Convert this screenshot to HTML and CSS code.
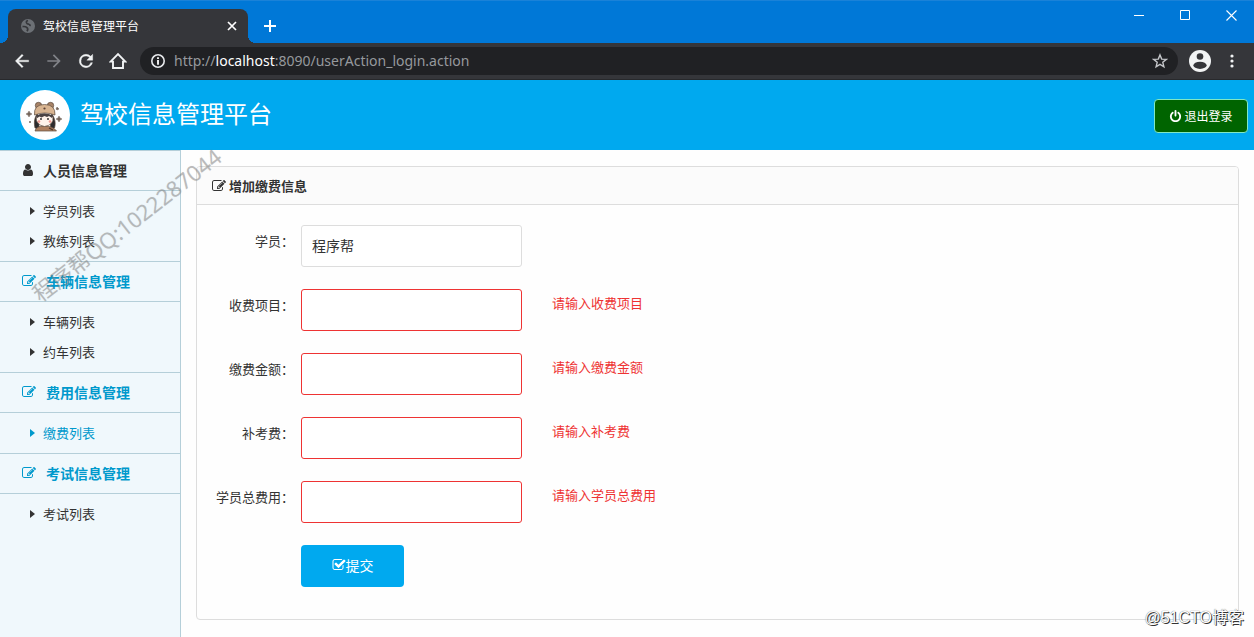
FILE: index.html
```html
<!DOCTYPE html>
<html lang="zh-CN">
<head>
<meta charset="utf-8">
<title>驾校信息管理平台</title>
<link rel="stylesheet" href="styles.css">
</head>
<body>
<svg class="sprite" aria-hidden="true">
  <symbol id="edit" viewBox="0 0 1792 1792"><path d="M888 1184l116-116-152-152-116 116v56h96v96h56zm440-720q-16-16-33 1l-350 350q-17 17-1 33t33-1l350-350q17-17 1-33zm80 594v190q0 119-84.5 203.5t-203.5 84.5h-832q-119 0-203.5-84.5t-84.5-203.5v-832q0-119 84.5-203.5t203.5-84.5h832q63 0 117 25 15 7 18 23 3 17-9 29l-49 49q-14 14-32 8-23-6-45-6h-832q-66 0-113 47t-47 113v832q0 66 47 113t113 47h832q66 0 113-47t47-113v-126q0-13 9-22l64-64q15-15 35-7t20 29zm-96-738l288 288-672 672h-288v-288zm444 132l-92 92-288-288 92-92q28-28 68-28t68 28l152 152q28 28 28 68t-28 68z"/></symbol>
  <symbol id="check" viewBox="0 0 1792 1792"><path d="M1472 930v318q0 119-84.5 203.5t-203.5 84.5h-832q-119 0-203.5-84.5t-84.5-203.5v-832q0-119 84.5-203.5t203.5-84.5h832q63 0 117 25 15 7 18 23 3 17-9 29l-49 49q-10 10-23 10-3 0-9-2-23-6-45-6h-832q-66 0-113 47t-47 113v832q0 66 47 113t113 47h832q66 0 113-47t47-113v-254q0-13 9-22l64-64q10-10 23-10 6 0 12 3 20 8 20 29zm231-489l-814 814q-24 24-57 24t-57-24l-430-430q-24-24-24-57t24-57l110-110q24-24 57-24t57 24l263 263 647-647q24-24 57-24t57 24l110 110q24 24 24 57t-24 57z"/></symbol>
  <symbol id="power" viewBox="0 0 1792 1792"><path d="M1664 896q0 156-61 298t-164 245-245 164-298 61-298-61-245-164-164-245-61-298q0-182 80.5-343t226.5-270q43-32 95.5-25t83.5 50q32 42 24.5 94.5t-49.5 84.5q-98 74-151.5 181t-53.5 228q0 104 40.5 198.5t109.5 163.5 163.5 109.5 198.5 40.5 198.5-40.5 163.5-109.5 109.5-163.5 40.5-198.5q0-121-53.5-228t-151.5-181q-42-32-49.5-84.5t24.5-94.5q31-43 84-50t95 25q146 109 226.5 270t80.5 343zm-640-768v640q0 52-38 90t-90 38-90-38-38-90v-640q0-52 38-90t90-38 90 38 38 90z"/></symbol>
  <symbol id="user" viewBox="200 128 1392 1536"><path d="M1536 1399q0 109-62.5 187t-150.5 78h-854q-88 0-150.5-78t-62.5-187q0-85 8.500-160.500t31.500-152 58.500-131 94-89 134.500-34.500q131 128 313 128t313-128q76 0 134.500 34.500t94 89 58.500 131 31.500 152 8.500 160.500zm-256-887q0 159-112.500 271.500t-271.500 112.500-271.500-112.500-112.500-271.500 112.500-271.500 271.500-112.500 271.500 112.500 112.500 271.500z"/></symbol>
  <symbol id="back" viewBox="0 0 24 24"><path d="M20 11H7.83l5.59-5.59L12 4l-8 8 8 8 1.41-1.41L7.83 13H20z"/></symbol>
</svg>

<div class="tabstrip">
  <div class="tab">
    <svg class="globe" viewBox="0 0 14 14"><circle cx="7" cy="7" r="7" fill="#6c7075"/><path d="M7 1.500q-2 .5-1.500 2.200.5 1.300 2.300 1.500 1.600.4 1.300 2M1.500 7.600q3-.4 4.500 1 1.500 1.500 0 3.600" fill="none" stroke="#35363a" stroke-width="1.700"/></svg>
    <span class="tab-title">驾校信息管理平台</span>
    <button class="bare" aria-label="关闭标签页"><svg width="10" height="10" viewBox="0 0 10 10"><path d="M1 1l8 8M9 1L1 9" stroke="#fff" stroke-width="1.7"/></svg></button>
  </div>
  <button class="bare new-tab" aria-label="新标签页"><svg width="12" height="12" viewBox="0 0 12 12"><path d="M6 0v12M0 6h12" stroke="#fff" stroke-width="2"/></svg></button>
  <div class="window-controls">
    <button class="bare" aria-label="最小化"><svg width="10" height="11" viewBox="0 0 10 11"><path d="M0 5.5h10" stroke="#fff"/></svg></button>
    <button class="bare" aria-label="最大化"><svg width="11" height="11" viewBox="0 0 11 11"><path d="M.5.5h9v9h-9z" fill="none" stroke="#fff"/></svg></button>
    <button class="bare" aria-label="关闭"><svg width="11" height="11" viewBox="0 0 11 11"><path d="M.5.5l10 10M10.5.5l-10 10" stroke="#fff" stroke-width="1.1"/></svg></button>
  </div>
</div>

<div class="toolbar">
  <button class="bare nav" aria-label="后退"><svg width="20" height="20" fill="#f1f3f4" stroke="#f1f3f4" stroke-width=".4"><use href="#back"/></svg></button>
  <button class="bare nav" aria-label="前进"><svg class="flip" width="20" height="20" fill="#818388"><use href="#back"/></svg></button>
  <button class="bare nav" aria-label="刷新"><svg width="20" height="20" viewBox="0 0 24 24" fill="#f1f3f4" stroke="#f1f3f4" stroke-width=".5"><path d="M17.65 6.35A7.96 7.96 0 0 0 12 4a8 8 0 1 0 7.73 10h-2.08A6 6 0 1 1 12 6c1.66 0 3.14.69 4.22 1.78L13 11h7V4z"/></svg></button>
  <button class="bare nav" aria-label="主页"><svg width="18" height="18" viewBox="0 0 18 18" fill="none" stroke="#f1f3f4" stroke-width="1.9"><path d="M1.6 9.6L9 2l7.4 7.600H14V16H4V9.600z"/></svg></button>
  <div class="omnibox">
    <svg width="16" height="16" viewBox="0 0 16 16"><circle cx="8" cy="8" r="6.200" fill="none" stroke="#e8eaed" stroke-width="1.600"/><path d="M8 4.200v1.700M8 7v4.800" stroke="#fff" stroke-width="1.800"/></svg>
    <span class="url">http://<b>localhost</b>:8090/userAction_login.action</span>
    <button class="bare" aria-label="收藏"><svg width="16" height="16" viewBox="0 0 16 16"><path d="M8 1.900l1.700 4.200 4.600.3-3.500 2.900 1.100 4.500L8 11.400l-3.900 2.400 1.100-4.500-3.500-2.900 4.600-.3z" fill="none" stroke="#c4c6c9" stroke-width="1.400"/></svg></button>
  </div>
  <button class="bare profile" aria-label="用户"><svg width="22" height="22" viewBox="0 0 22 22"><circle cx="11" cy="11" r="11" fill="#f1f3f4"/><circle cx="11" cy="6.500" r="3.300" fill="#35363a"/><ellipse cx="11" cy="15.300" rx="6.600" ry="3.600" fill="#35363a"/></svg></button>
  <button class="bare menu" aria-label="菜单"><svg width="4" height="14" viewBox="0 0 4 14" fill="#f1f3f4"><circle cx="2" cy="2" r="1.600"/><circle cx="2" cy="7" r="1.600"/><circle cx="2" cy="12" r="1.600"/></svg></button>
</div>

<header class="header">
  <svg class="avatar" viewBox="0 0 50 50">
    <circle cx="25" cy="25" r="25" fill="#fff"/>
    <g stroke="#5b4a3e" stroke-width=".7">
      <circle cx="18.500" cy="15.500" r="3.200" fill="#a98467"/><circle cx="30.500" cy="15.500" r="3.200" fill="#a98467"/>
      <path d="M17 24c-3 5-3 9-2 14l4 1V26zM32 24c3 5 4 9 2.500 14l-4 1V26z" fill="#2c2b2e"/>
      <path d="M15 41q1-5 9-5 9 0 12.500 5z" fill="#ae8060"/>
      <path d="M16 27q8-6 17 0 1 8-8.500 9.500Q16 35 16 27z" fill="#fff3eb"/>
      <path d="M14.500 25q-1-10.500 10-10.500T35 25q-10-4-20.500 0z" fill="#d9b591"/>
    </g>
    <path d="M16.500 25.500q8-4 16 0l-.5 2.500-3-2-2 1-2.500-1-3 1.500-2-1-3 2z" fill="#4a4344"/>
    <circle cx="21" cy="29" r=".9" fill="#222"/><circle cx="28" cy="29" r=".9" fill="#222"/>
    <circle cx="19" cy="31.500" r="1.300" fill="#f29a91"/><circle cx="30" cy="31.500" r="1.300" fill="#f29a91"/>
    <circle cx="24.500" cy="18.500" r="1.100" fill="#5b4035"/><path d="M29 38l4 2" stroke="#493329" stroke-width="1.300"/>
    <path d="M9 21l1 2 2 1-2 1-1 2-1-2-2-1 2-1zM39 26l1 2 2 1-2 1-1 2-1-2-2-1 2-1zM37 17l2 2-2 1-1-1zM10 31l1 1-1 1-1-1z" fill="#75655a" stroke="#75655a" stroke-width=".5"/>
  </svg>
  <h1 class="brand">驾校信息管理平台</h1>
  <a class="logout" href="#"><svg class="icon"><use href="#power"/></svg>退出登录</a>
</header>

<div class="main">
  <nav class="sidebar">
    <h2 class="group first"><svg class="icon"><use href="#user"/></svg>人员信息管理</h2>
    <ul class="items"><li><a href="#">学员列表</a></li><li><a href="#">教练列表</a></li></ul>
    <h2 class="group"><svg class="icon"><use href="#edit"/></svg>车辆信息管理</h2>
    <ul class="items"><li><a href="#">车辆列表</a></li><li><a href="#">约车列表</a></li></ul>
    <h2 class="group"><svg class="icon"><use href="#edit"/></svg>费用信息管理</h2>
    <ul class="items"><li><a class="active" href="#">缴费列表</a></li></ul>
    <h2 class="group"><svg class="icon"><use href="#edit"/></svg>考试信息管理</h2>
    <ul class="items"><li><a href="#">考试列表</a></li></ul>
  </nav>
  <main class="content">
    <section class="panel">
      <h2 class="panel-head"><svg class="icon"><use href="#edit"/></svg>增加缴费信息</h2>
      <form class="form">
        <div class="row"><label for="student">学员：</label><input class="field" id="student" type="text" value="程序帮"></div>
        <div class="row"><label for="item">收费项目：</label><input class="field invalid" id="item" type="text"><span class="error">请输入收费项目</span></div>
        <div class="row"><label for="amount">缴费金额：</label><input class="field invalid" id="amount" type="text"><span class="error">请输入缴费金额</span></div>
        <div class="row"><label for="retake">补考费：</label><input class="field invalid" id="retake" type="text"><span class="error">请输入补考费</span></div>
        <div class="row"><label for="total">学员总费用：</label><input class="field invalid" id="total" type="text"><span class="error">请输入学员总费用</span></div>
        <div class="row actions"><button class="submit" type="submit"><svg class="icon"><use href="#check"/></svg>提交</button></div>
      </form>
    </section>
  </main>
</div>
<div class="watermark">程序帮QQ:1022287044</div>
<div class="credit">@51CTO博客</div>
</body>
</html>
```
FILE: styles.css
```css
* { box-sizing: border-box; }
body {
  margin: 0;
  min-height: 100vh;
  display: flex;
  flex-direction: column;
  position: relative;
  overflow-x: hidden;
  background: #fefefe;
  color: #333;
  font: 13px/28px "Noto Sans CJK SC", sans-serif;
}
h1, h2, ul { margin: 0; padding: 0; font-weight: 400; list-style: none; }
a { color: inherit; text-decoration: none; }
svg { display: block; flex: none; }
.sprite { position: absolute; width: 0; height: 0; }
.icon { width: 14px; height: 14px; fill: currentColor; }
.bare { display: flex; align-items: center; justify-content: center; padding: 0; border: 0; background: none; }
.flip { transform: scaleX(-1); }

.tabstrip { display: flex; height: 43px; padding: 8px 0 0 8px; background: #0078d7; border-top: 1px solid #1a82d8; }
.tab {
  display: flex; align-items: center; gap: 8px;
  width: 240px; padding: 0 11px 0 13px;
  background: #35363a; border-radius: 8px 8px 0 0; color: #fff;
  position: relative;
}
.tab::before, .tab::after { content: ""; position: absolute; bottom: 0; width: 8px; height: 8px; }
.tab::before { left: -8px; background: radial-gradient(circle at 0 0, transparent 8px, #35363a 8px); }
.tab::after { right: -8px; background: radial-gradient(circle at 100% 0, transparent 8px, #35363a 8px); }
.globe { width: 14px; height: 14px; }
.tab-title { flex: 1; font-size: 12px; line-height: 20px; }
.new-tab { width: 44px; }
.window-controls { display: flex; height: 12px; margin-left: auto; }
.window-controls .bare { width: 46px; }

.toolbar { display: flex; align-items: center; height: 37px; padding: 0 14px 0 6px; background: #35363a; border-bottom: 1px solid #28292c; }
.nav { width: 32px; height: 28px; }
.omnibox { flex: 1; display: flex; align-items: center; gap: 8px; height: 28px; margin-left: 6px; padding: 0 10px; border-radius: 14px; background: #202124; }
.url { flex: 1; font: 14px/20px "Noto Sans", sans-serif; color: #96999d; }
.url b { font-weight: 400; color: #fff; }
.profile { width: 22px; margin-left: 11px; }
.menu { width: 16px; margin-left: 13px; }

.header { display: flex; align-items: center; height: 70px; padding: 0 6px 0 20px; background: #00a9ef; color: #fff; }
.avatar { width: 50px; height: 50px; }
.brand { margin-left: 10px; padding-bottom: 4px; font-size: 24px; line-height: 36px; }
.logout {
  display: flex; align-items: center; justify-content: center; gap: 2px;
  margin: 2px 0 0 auto; width: 94px; height: 34px;
  border: 1px solid #7fe8c4; border-radius: 4px; background: #006400; font-size: 12px;
}
.logout .icon { width: 13px; height: 13px; }

.main { flex: 1; display: flex; }
.sidebar { width: 181px; background: #f0f8fc; border-right: 1px solid #b5cfd9; }
.group {
  display: flex; align-items: center; gap: 10px;
  height: 41px; padding: 0 0 2px 22px;
  border: solid #b5cfd9; border-width: 1px 0;
  color: #0099cc; font-size: 14px; font-weight: 700;
}
.group.first { color: #333; gap: 9px; }
.group.first .icon { width: 12px; height: 12px; }
.items { padding: 5px 0; }
.items a { display: flex; align-items: center; gap: 8px; height: 30px; padding-left: 30px; }
.items a::before { content: ""; border: solid transparent; border-width: 4px 0 4px 5px; border-left-color: currentColor; }
.items .active { color: #0099cc; }

.content { flex: 1; padding: 16px 15px; }
.panel { border: 1px solid #ddd; border-radius: 4px; overflow: hidden; }
.panel-head { display: flex; align-items: center; gap: 3px; height: 38px; padding-left: 15px; background: #fbfbfb; border-bottom: 1px solid #ddd; font-size: 13px; font-weight: 700; }
.form { padding: 20px 0 32px; display: grid; gap: 22px; }
.row { display: flex; align-items: flex-start; min-height: 42px; }
.row label { width: 97px; margin-right: 7px; padding-top: 2px; text-align: right; }
.field { width: 221px; height: 42px; padding: 9px 10px 11px; border: 1px solid #ddd; border-radius: 3px; background: #fff; color: #333; font: 14px/20px "Noto Sans CJK SC", sans-serif; }
.invalid { border-color: #e33; }
.error { margin-left: 30px; color: #e33; }
.actions { padding-left: 104px; }
.submit { display: flex; align-items: center; justify-content: center; width: 103px; height: 42px; padding: 0 0 2px; border: 0; border-radius: 4px; background: #00a9ef; color: #fff; font: 14px/20px "Noto Sans CJK SC", sans-serif; }

.watermark { position: absolute; left: 35px; top: 281px; transform: rotate(-38deg); transform-origin: 0 50%; font: 22px/30px "Noto Sans", "Noto Sans CJK SC", sans-serif; color: rgba(130, 130, 130, .45); text-shadow: 0 0 1px rgba(130, 130, 130, .2); white-space: nowrap; pointer-events: none; }
.credit { position: absolute; right: 10px; bottom: 7px; font: 16px/24px "Liberation Sans", "Noto Sans CJK SC", sans-serif; color: #fff; text-shadow: 1px 1px 0 #333, 0 0 1px #444; pointer-events: none; }
```
